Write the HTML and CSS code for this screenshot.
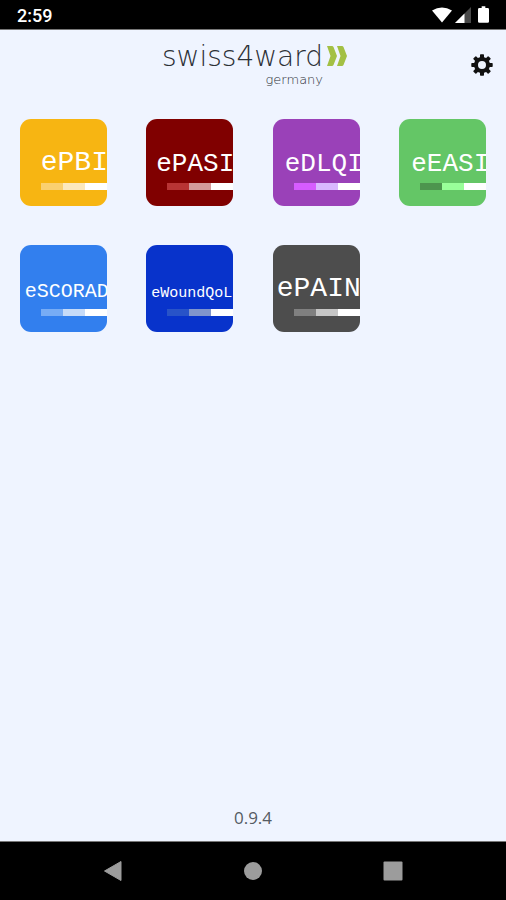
FILE: index.html
```html
<!DOCTYPE html>
<html lang="en">
<head>
    <meta charset="UTF-8">
    <meta name="viewport" content="width=device-width, initial-scale=1.0">
    <title>swiss4ward germany</title>
    <link rel="stylesheet" href="styles.css">
</head>
<body>
    <div class="status-bar">
        <span class="time">2:59</span>
        <div class="status-icons">
            <svg width="20" height="16" viewBox="0 0 20 16"><path d="M0 3.5Q10-2.5 20 3.5L10 15.5z" fill="#fff"/></svg>
            <svg width="16" height="16" viewBox="0 0 16 16"><path d="M16 0v16H0z" fill="#484848"/><path d="M9.500 6.500V16H0z" fill="#fff"/></svg>
            <svg class="battery" width="11" height="17" viewBox="0 0 12 18"><path d="M4 0h4v2h2.500q1.500 0 1.500 1.500v13q0 1.500-1.500 1.500h-9Q0 18 0 16.500v-13Q0 2 1.500 2H4z" fill="#fff"/></svg>
        </div>
    </div>

    <header class="header">
        <div class="logo">
            <div class="logo-text">
                <span class="logo-name">swiss4ward</span>
                <span class="logo-country">germany</span>
            </div>
            <svg class="logo-arrows" width="20" height="20" viewBox="0 0 20 20">
                <path d="M0 0h5q1 0 1.500 1L10 10 6.500 19q-.5 1-1.500 1H0l3.500-10z" fill="#a3c044"/>
                <path d="M10 0h5q1 0 1.500 1l3.500 9-3.500 9q-.5 1-1.500 1h-5l3.500-10z" fill="#a3c044"/>
            </svg>
        </div>
        <button class="settings" aria-label="Settings">
            <svg width="22" height="22" viewBox="-11 -11 22 22">
                <g fill="#111">
                    <path id="tooth" d="M-2-10q0-.7.7-.7h2.600q.7 0 .7.7V-6h-4z"/>
                    <use href="#tooth" transform="rotate(45)"/>
                    <use href="#tooth" transform="rotate(90)"/>
                    <use href="#tooth" transform="rotate(135)"/>
                    <use href="#tooth" transform="rotate(180)"/>
                    <use href="#tooth" transform="rotate(225)"/>
                    <use href="#tooth" transform="rotate(270)"/>
                    <use href="#tooth" transform="rotate(315)"/>
                </g>
                <circle r="6" fill="none" stroke="#111" stroke-width="4"/>
            </svg>
        </button>
    </header>

    <main class="apps">
        <button class="tile pbi"><span class="name large">ePBI</span><span class="bar"><i></i><i></i><i></i></span></button>
        <button class="tile pasi"><span class="name">ePASI</span><span class="bar"><i></i><i></i><i></i></span></button>
        <button class="tile dlqi"><span class="name">eDLQI</span><span class="bar"><i></i><i></i><i></i></span></button>
        <button class="tile easi"><span class="name">eEASI</span><span class="bar"><i></i><i></i><i></i></span></button>
        <button class="tile scorad"><span class="name medium">eSCORAD</span><span class="bar"><i></i><i></i><i></i></span></button>
        <button class="tile wound"><span class="name small">eWoundQoL</span><span class="bar"><i></i><i></i><i></i></span></button>
        <button class="tile pain"><span class="name large">ePAIN</span><span class="bar"><i></i><i></i><i></i></span></button>
    </main>

    <footer class="version">0.9.4</footer>

    <nav class="nav-bar">
        <button aria-label="Back"><svg width="20" height="22" viewBox="0 0 20 22"><path d="M18 1.500v19L1.500 11z" fill="#9c9c9c" stroke="#9c9c9c" stroke-linejoin="round"/></svg></button>
        <button aria-label="Home"><svg width="20" height="20" viewBox="0 0 20 20"><circle cx="10" cy="10" r="9" fill="#9c9c9c"/></svg></button>
        <button aria-label="Recent apps"><svg width="20" height="20" viewBox="0 0 20 20"><rect x=".5" y=".5" width="19" height="19" rx="1" fill="#9c9c9c"/></svg></button>
    </nav>
</body>
</html>
```
FILE: styles.css
```css
* {
    box-sizing: border-box;
}

body {
    margin: 0;
    min-height: 100vh;
    display: flex;
    flex-direction: column;
    background-color: #eff4ff;
    color: #555b63;
    font-family: "Open Sans", "Noto Sans", sans-serif;
}

button {
    padding: 0;
    border: none;
    background: none;
    cursor: pointer;
}

svg {
    display: block;
}

.status-bar {
    display: flex;
    justify-content: space-between;
    align-items: center;
    height: 30px;
    padding: 0 17px;
    background-color: #000;
    border-bottom: 1px solid #777;
    color: #fff;
}

.time {
    font-family: Roboto, sans-serif;
    font-size: 18px;
    font-weight: 500;
    line-height: 20px;
    padding-top: 3px;
}

.status-icons {
    display: flex;
    align-items: flex-end;
    gap: 3px;
}

.battery {
    margin-left: 4px;
}

/* Header */
.header {
    display: grid;
    grid-template-columns: 1fr auto 1fr;
    align-items: center;
    height: 69px;
    padding: 0 13px 0 16px;
}

.logo {
    grid-column: 2;
    display: flex;
    align-items: flex-start;
    gap: 4px;
}

.logo-text {
    display: flex;
    flex-direction: column;
    align-items: flex-end;
    color: #2c3036;
    font-family: "DejaVu Sans", sans-serif;
    font-weight: 200;
}

.logo-name {
    font-size: 28px;
    line-height: 30px;
}

.logo-country {
    font-size: 13px;
    line-height: 16px;
}

.logo-arrows {
    margin-top: 4px;
}

.settings {
    justify-self: end;
}

/* App tiles */
.apps {
    flex: 1;
    display: grid;
    grid-template-columns: repeat(4, 1fr);
    align-content: start;
    justify-items: center;
    row-gap: 39px;
    padding-top: 20px;
}

.tile {
    width: 87px;
    height: 87px;
    display: flex;
    flex-direction: column;
    justify-content: flex-end;
    gap: 5px;
    padding-bottom: 16px;
    border-radius: 11px;
    overflow: hidden;
    color: #fff;
    text-align: left;
}

.name {
    padding-left: 12px;
    font-family: "Liberation Mono", monospace;
    font-size: 26px;
    line-height: 28px;
    white-space: nowrap;
}

.large {
    font-size: 28px;
    line-height: 30px;
}

.medium {
    padding-left: 5px;
    font-size: 20px;
    line-height: 24px;
}

.small {
    padding-left: 5px;
    font-size: 15px;
    line-height: 20px;
}

.bar {
    display: flex;
    height: 7px;
    padding-left: 21px;
}

.bar i {
    flex: 1;
    background-color: #fff;
}

.pbi { background-color: #f7b512; }
.pbi .name { padding-left: 21px; }
.pbi i:nth-child(1) { background-color: #fad070; }
.pbi i:nth-child(2) { background-color: #fce8bd; }

.pasi { background-color: #800000; }
.pasi i:nth-child(1) { background-color: #b83434; }
.pasi i:nth-child(2) { background-color: #d49a9a; }
.pasi .name { padding-left: 10px; }

.dlqi { background-color: #9a41b8; }
.dlqi i:nth-child(1) { background-color: #d65cff; }
.dlqi i:nth-child(2) { background-color: #d9b8ff; }

.easi { background-color: #64c666; }
.easi i:nth-child(1) { background-color: #4d954e; }
.easi i:nth-child(2) { background-color: #99ff99; }

.scorad { background-color: #327fee; }
.scorad i:nth-child(1) { background-color: #77acf5; }
.scorad i:nth-child(2) { background-color: #c6dbf8; }

.wound { background-color: #0833cb; }
.wound i:nth-child(1) { background-color: #2853c8; }
.wound i:nth-child(2) { background-color: #8095cc; }

.pain { background-color: #4d4d4d; }
.pain .name { padding-left: 4px; }
.pain i:nth-child(1) { background-color: #808080; }
.pain i:nth-child(2) { background-color: #c6c6c6; }

.version {
    padding-bottom: 11px;
    font-size: 17px;
    line-height: 24px;
    text-align: center;
}

.nav-bar {
    display: grid;
    grid-template-columns: repeat(3, 1fr);
    place-items: center;
    height: 59px;
    padding: 0 43px;
    background-color: #000;
    border-top: 1px solid #777;
}
```
